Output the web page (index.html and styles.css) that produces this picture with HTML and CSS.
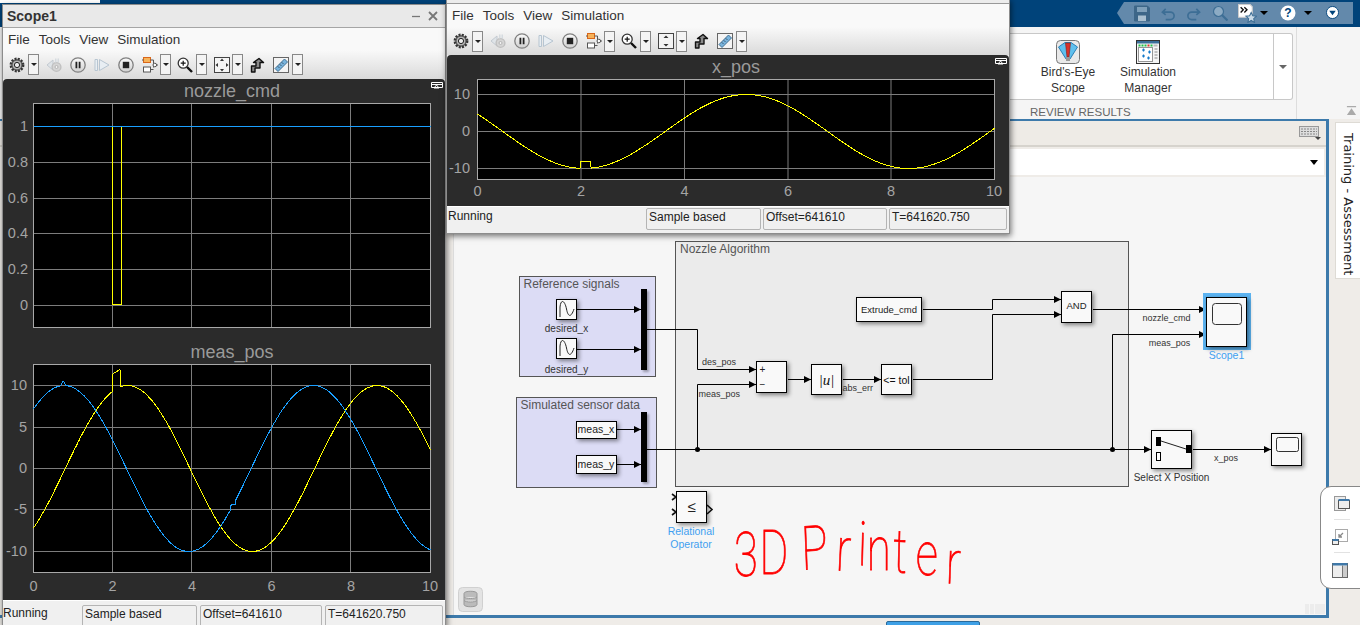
FILE: index.html
```html
<!DOCTYPE html>
<html lang="en">
<head>
<meta charset="utf-8">
<title>3D Printer model with scopes</title>
<link rel="stylesheet" href="styles.css">
</head>
<body>
<div class="desk">
  <svg class="defs" width="0" height="0" aria-hidden="true">
    <defs>
      <marker id="arr" markerUnits="userSpaceOnUse" markerWidth="8" markerHeight="8" refX="7" refY="4" orient="auto"><path d="M0 .5 7 4 0 7.5z" fill="#000"/></marker>
      <linearGradient id="btn" x1="0" y1="0" x2="0" y2="1"><stop offset="0" stop-color="#fbfbfb"/><stop offset="1" stop-color="#cfcfcf"/></linearGradient>
      <symbol id="i-gear" viewBox="0 0 16 16"><circle cx="8" cy="8" r="6.2" fill="#aaa" stroke="#333" stroke-width="2.4" stroke-dasharray="2 1.25"/><circle cx="8" cy="8" r="5" fill="#b5b5b5" stroke="#444"/><circle cx="8" cy="8" r="2.6" fill="#eee" stroke="#222"/></symbol>
      <symbol id="i-back" viewBox="0 0 16 16"><path d="M7 3 1 8l6 5z" fill="#dfe4e8" stroke="#c3cad1"/><circle cx="10.5" cy="10" r="4.4" fill="#d5d5d5" stroke="#c0c0c0" stroke-width="1.4"/><circle cx="10.5" cy="10" r="1.5" fill="#f2f2f2" stroke="#b5b5b5"/><path d="M9 1.5h1.5v4H9zM11.500 1.500H13v4h-1.500z" fill="#d5dbe0"/></symbol>
      <symbol id="i-pause" viewBox="0 0 16 16"><circle cx="8" cy="8" r="7.2" fill="url(#btn)" stroke="#808080" stroke-width="1.300"/><path d="M5.500 4.800h1.800v6.400H5.500zM8.700 4.800h1.800v6.400H8.700z" fill="#222"/></symbol>
      <symbol id="i-step" viewBox="0 0 16 16"><path d="M1 2.500h2.500v11H1z" fill="#e8eef3" stroke="#b7c5d1"/><path d="M5.500 2.500 15 8l-9.500 5.500z" fill="#e8eef3" stroke="#b7c5d1"/></symbol>
      <symbol id="i-stop" viewBox="0 0 16 16"><circle cx="8" cy="8" r="7.200" fill="url(#btn)" stroke="#808080" stroke-width="1.300"/><rect x="4.800" y="4.800" width="6.400" height="6.400" fill="#222"/></symbol>
      <symbol id="i-block" viewBox="0 0 16 16"><rect x="1.500" y=".5" width="7" height="5" fill="#f7b35a" stroke="#d9671a"/><rect x="1.500" y="10" width="7" height="5" fill="#fff" stroke="#555"/><path d="M8.500 3h3v7.500M8.500 12.500h3" fill="none" stroke="#555"/><circle cx="12.800" cy="8" r="1.800" fill="#fff" stroke="#555"/><path d="M0 3h1.500M14.600 8H16" stroke="#555"/></symbol>
      <symbol id="i-zoom" viewBox="0 0 16 16"><circle cx="6.200" cy="6.200" r="5" fill="#fff" stroke="#333" stroke-width="1.300"/><path d="M3.700 6.200h5M6.200 3.700v5" stroke="#111" stroke-width="1.200"/><path d="M10 10l5 5" stroke="#111" stroke-width="2.400"/></symbol>
      <symbol id="i-fit" viewBox="0 0 16 16"><rect x=".5" y=".5" width="15" height="15" fill="#f4f4f4" stroke="#444"/><path d="M8 1.500 10 4H6zM8 14.500 6 12h4zM1.500 8 4 6v4zM14.500 8 12 10V6z" fill="#333"/></symbol>
      <symbol id="i-fity" viewBox="0 0 16 16"><rect x=".5" y=".5" width="15" height="15" fill="#f4f4f4" stroke="#444"/><path d="M8 2.500 10.500 5h-5zM8 13.500 5.500 11h5z" fill="#333"/></symbol>
      <symbol id="i-jump" viewBox="0 0 16 16"><path d="M2.500 15V9H7V5.500H4.500L10 1.500l4.500 4H11V11H6v4z" fill="#8a8a8a" stroke="#111" stroke-width="1.400" stroke-linejoin="round"/></symbol>
      <symbol id="i-ruler" viewBox="0 0 16 16"><rect x=".5" y=".5" width="15" height="15" fill="#f4f4f4" stroke="#666"/><path d="M2 11.500 11.500 2 14.500 5 5 14.500z" fill="#79b4dd" stroke="#3f6f92"/><path d="M5 9.500 6.200 10.700M7 7.500 8.200 8.700M9 5.500 10.200 6.700" stroke="#234"/></symbol>
    </defs>
  </svg>

  <header class="topbar">
    <div class="stub"></div>
    <div class="qa">
      <svg class="qa-ic qa-save" viewBox="0 0 16 16"><path d="M.5.500h13l2 2v13H.5z" fill="#3d6688" stroke="#3d6688"/><rect x="3" y="1.500" width="10" height="5" fill="#7fa0ba"/><rect x="4" y="10" width="8" height="5.500" fill="#a9bfd0"/></svg>
      <svg class="qa-ic qa-undo" viewBox="0 0 16 16"><path d="M5 3 1.500 6.500 5 9.500M2 6.500h8a4 4 0 0 1 0 8H5" fill="none" stroke="#3d6e95" stroke-width="1.800"/></svg>
      <svg class="qa-ic qa-redo" viewBox="0 0 16 16"><path d="M11 3l3.500 3.500L11 9.500M14 6.500H6a4 4 0 0 0 0 8h5" fill="none" stroke="#3d6e95" stroke-width="1.800"/></svg>
      <svg class="qa-ic qa-find" viewBox="0 0 16 16"><circle cx="6.500" cy="6.500" r="5" fill="#8cabc4" stroke="#3d6e95" stroke-width="1.200"/><path d="M10 10l5.500 5.500" stroke="#3d6e95" stroke-width="2.200"/></svg>
      <svg class="qa-ic qa-short" viewBox="0 0 18 18"><path d="M.5.500h11l2 2v10H.5z" fill="#fff" stroke="#ccc"/><path d="M2.500 3l2.500 2.500-2.500 2.500M6 3l2.500 2.500L6 8" fill="none" stroke="#111" stroke-width="1.300"/><path d="M12.500 8l1.500 3.200 3.500.4-2.600 2.300.7 3.500-3.100-1.800-3.100 1.800.7-3.500-2.600-2.300 3.500-.4z" fill="#cbdbe8" stroke="#3d6e95"/></svg>
      <i class="qa-tri qa-tri-a"></i>
      <svg class="qa-ic qa-help" viewBox="0 0 16 16"><circle cx="8" cy="8" r="7.500" fill="#fff"/><text x="8" y="12.300" class="qa-q">?</text></svg>
      <i class="qa-tri qa-tri-b"></i>
      <svg class="qa-ic qa-min" viewBox="0 0 14 14"><circle cx="7" cy="7" r="6.500" fill="#fff" stroke="#00437a"/><path d="M3.500 5h7L7 10z" fill="#00437a"/></svg>
    </div>
  </header>

  <section class="ribbon">
    <div class="rgroup">
      <div class="rpanel">
        <div class="rbtn rbtn-first">
          <svg class="rico" viewBox="0 0 24 24"><rect x=".5" y=".5" width="23" height="23" rx="4" fill="#e9e9e9" stroke="#777"/><path d="M2.500 7 9 2.500h6L21.500 7 14 19h-4z" fill="#5fc0ee" stroke="#2b7fb5"/><path d="M9.500 3h5l-1.500 14h-2z" fill="#d8322a" stroke="#7d1f1a" stroke-width=".6"/><rect x="10" y="17" width="4" height="4" fill="#999"/></svg>
          <span>Bird's-Eye</span><span>Scope</span>
        </div>
        <div class="rbtn">
          <svg class="rico" viewBox="0 0 24 24"><rect x=".5" y=".5" width="23" height="23" fill="#f5f5f5" stroke="#333"/><rect x="1" y="1" width="22" height="2.500" fill="#3a6f9a"/><path d="M2.500 4.500h2v2h-2zM5.500 4.500h2v2h-2zM8.500 4.500h2v2h-2zM14.500 4.500h2v2h-2z" fill="#22c14a"/><path d="M11.500 4.500h2v2h-2z" fill="#e0312a"/><path d="M17.500 4.500h4v2h-4z" fill="#bbb"/><rect x="2.500" y="7.500" width="14" height="14" fill="#fff" stroke="#333" stroke-dasharray="1 1"/><path d="M6 10h3M7.500 8.500v3M12 12h3M13.500 10.500v3M6 16h3M7.500 14.500v3M11 18h3M12.500 16.500v3" stroke="#1479c9" stroke-width="1.200"/><path d="M18.500 9h3M18.500 12h3M18.500 15h3M18.500 18h3" stroke="#888"/></svg>
          <span>Simulation</span><span>Manager</span>
        </div>
        <div class="rmore"><i class="rmore-tri"></i></div>
      </div>
      <div class="rlabel">REVIEW RESULTS</div>
    </div>
    <svg class="rcollapse" viewBox="0 0 12 12"><path d="M1 1h10v1.500H1zM6 3.500 11 11H1z" fill="#aaa"/></svg>
  </section>

  <div class="work">
    <main class="editor">
      <div class="etool">
        <svg class="kbd" viewBox="0 0 22 14"><rect x=".5" y=".5" width="19" height="10" fill="#ddd" stroke="#999"/><path d="M2 3h16M2 5.500h16M2 8h16" stroke="#888" stroke-dasharray="2 1"/><path d="M16 11h6l-3 3z" fill="#444"/></svg>
      </div>
      <div class="eaddr"><i class="eaddr-tri"></i></div>
      <div class="canvas">
        <svg class="diagram" width="874" height="438" viewBox="453 177 874 438">
          <rect class="area-g" x="675.500" y="241.500" width="453" height="245"/>
          <rect class="area-b" x="519.500" y="276.500" width="136" height="100"/>
          <rect class="area-b" x="516.500" y="397.500" width="140" height="90"/>
          <text class="t-area" x="680" y="253">Nozzle Algorithm</text>
          <text class="t-area" x="523.500" y="288">Reference signals</text>
          <text class="t-area" x="520.500" y="409">Simulated sensor data</text>

          <g class="wire">
            <path marker-end="url(#arr)" d="M577 309.500H641"/>
            <path marker-end="url(#arr)" d="M577 349.500H641"/>
            <path marker-end="url(#arr)" d="M617 429.500H641"/>
            <path marker-end="url(#arr)" d="M617 464.500H641"/>
            <path marker-end="url(#arr)" d="M647 329.500H697.500V369.500H756"/>
            <path marker-end="url(#arr)" d="M697.500 449.500V384.500H756"/>
            <path marker-end="url(#arr)" d="M647 449.500H1151"/>
            <path marker-end="url(#arr)" d="M788 379.500H811"/>
            <path marker-end="url(#arr)" d="M843 379.500H881"/>
            <path marker-end="url(#arr)" d="M913 379.500H992.500V314.500H1061"/>
            <path marker-end="url(#arr)" d="M923 309.500H992.500V299.500H1061"/>
            <path marker-end="url(#arr)" d="M1093 309.500H1206"/>
            <path marker-end="url(#arr)" d="M1112.500 449.500V334.500H1206"/>
            <path marker-end="url(#arr)" d="M1193 449.500H1271"/>
          </g>
          <circle cx="697.500" cy="449.500" r="2.500"/>
          <circle cx="1112.500" cy="449.500" r="2.500"/>

          <rect x="641" y="289" width="6" height="81" class="bar"/>
          <rect x="641" y="412" width="6" height="70" class="bar"/>

          <rect class="blk" x="556.500" y="299.500" width="20" height="20"/>
          <path class="ink" d="M560 317V307C561 298 565 301 566.500 309S571 318 574 309"/>
          <rect class="blk" x="556.500" y="338.500" width="20" height="20"/>
          <path class="ink" d="M560 356V346C561 337 565 340 566.500 348S571 357 574 348"/>
          <text class="t-lbl t-mid" x="566.500" y="332">desired_x</text>
          <text class="t-lbl t-mid" x="566.500" y="372.500">desired_y</text>

          <rect class="blk" x="576.500" y="421.500" width="40" height="17"/>
          <rect class="blk" x="576.500" y="455.500" width="40" height="18"/>
          <text class="t-blk t-mid" x="596" y="433">meas_x</text>
          <text class="t-blk t-mid" x="596" y="468">meas_y</text>

          <rect class="blk" x="756.500" y="361.500" width="30" height="31"/>
          <text class="t-sign" x="759.500" y="373">+</text>
          <text class="t-sign" x="759.500" y="388">−</text>
          <rect class="blk" x="811.500" y="364.500" width="30" height="30"/>
          <text class="t-u t-mid" x="826.500" y="384.500">|u|</text>
          <rect class="blk" x="881.500" y="364.500" width="30" height="30"/>
          <text class="t-tol t-mid" x="896.500" y="383.500">&lt;= tol</text>
          <rect class="blk" x="856.500" y="297.500" width="65" height="24"/>
          <text class="t-small t-mid" x="889" y="312.500">Extrude_cmd</text>
          <rect class="blk" x="1061.500" y="291.500" width="30" height="31"/>
          <text class="t-small t-mid" x="1076.500" y="309">AND</text>

          <text class="t-wire" x="702" y="365">des_pos</text>
          <text class="t-wire" x="698.500" y="396.500">meas_pos</text>
          <text class="t-wire" x="842.500" y="391">abs_err</text>
          <text class="t-wire t-mid" x="1166.500" y="321">nozzle_cmd</text>
          <text class="t-wire t-mid" x="1169.500" y="346">meas_pos</text>
          <text class="t-wire t-mid" x="1226" y="461">x_pos</text>

          <rect class="sel" x="1203" y="293" width="48" height="57"/>
          <rect class="blk" x="1206.500" y="297.500" width="40" height="49"/>
          <rect class="screen" x="1212.500" y="303.500" width="29" height="21" rx="3"/>
          <text class="t-blue t-mid" x="1226.500" y="359">Scope1</text>

          <rect class="blk" x="1151.500" y="430.500" width="40" height="38"/>
          <rect x="1156" y="437" width="5" height="9"/>
          <rect x="1186" y="445" width="5" height="8"/>
          <rect class="hollow" x="1156.500" y="452.500" width="4" height="8"/>
          <path class="ink" d="M1161 441 1186 449"/>
          <text class="t-name t-mid" x="1171.500" y="481">Select X Position</text>

          <rect class="blk" x="1271.500" y="433.500" width="30" height="32"/>
          <rect class="screen" x="1276.500" y="437.500" width="22" height="14" rx="2"/>

          <path class="port" d="M672 494l4 3-4 3M672 509l4 3-4 3M707 505l5 4.500-5 4.500"/>
          <rect class="blk" x="676.500" y="491.500" width="30" height="31"/>
          <text class="t-le t-mid" x="691.500" y="512">≤</text>
          <text class="t-blue t-mid" x="691" y="535">Relational</text>
          <text class="t-blue t-mid" x="691" y="548">Operator</text>

          <text class="hand" transform="matrix(.72 0 0 1 0 0)" x="1019 1055 1097 1114 1160 1191 1204 1240 1272 1313" y="576 574 570 570 570 565 570 572 575 583" rotate="0 0 0 -3 4 2 0 2 0 3" xml:space="preserve">3D Printer</text>

          <rect class="dbbtn" x="458.500" y="587.500" width="24" height="24" rx="4"/>
          <path class="dbico" d="M464 593.500c0-3 13-3 13 0v11c0 3-13 3-13 0zM464 597c2 2 11 2 13 0M464 600.500c2 2 11 2 13 0"/>
          <rect class="grip" x="1305" y="604" width="4" height="10"/>
          <rect class="grip" x="1310" y="604" width="4" height="10"/>
          <rect class="grip" x="1315" y="604" width="10" height="10"/>
        </svg>
      </div>
    </main>
    <aside class="sidetab"><span>Training - Assessment</span></aside>
  </div>

  <footer class="bottom"><div class="bluebtn"></div></footer>

  <section class="win win-scope">
    <div class="wtitle"><b>Scope1</b>
      <span class="wbtns">
        <svg class="wb wb-min" viewBox="0 0 10 10"><path d="M1 5.500h8" stroke="#777" stroke-width="1.300"/></svg>
        <svg class="wb" viewBox="0 0 10 10"><path d="M1 1l8 8M9 1l-8 8" stroke="#777" stroke-width="1.800"/></svg>
      </span>
    </div>
    <nav class="menu"><span>File</span><span>Tools</span><span>View</span><span>Simulation</span></nav>
    <div class="tbar">
      <svg class="ic ic-a"><use href="#i-gear"/></svg><i class="dd dd-w"></i>
      <svg class="ic"><use href="#i-back"/></svg>
      <svg class="ic"><use href="#i-pause"/></svg>
      <svg class="ic"><use href="#i-step"/></svg>
      <svg class="ic"><use href="#i-stop"/></svg>
      <svg class="ic ic-b"><use href="#i-block"/></svg><i class="dd"></i>
      <svg class="ic ic-a"><use href="#i-zoom"/></svg><i class="dd dd-w"></i>
      <svg class="ic ic-b"><use href="#i-fit"/></svg><i class="dd"></i>
      <svg class="ic"><use href="#i-jump"/></svg>
      <svg class="ic ic-a"><use href="#i-ruler"/></svg><i class="dd"></i>
    </div>
    <div class="panel">
      <svg class="plot" width="442" height="521" viewBox="3 79 442 521">
        <path class="undock" d="M431.500 82.500h11v5h-11zM431.500 84.500h11M434 88l2.500-3 2.500 3z"/>
        <text class="ptitle" x="232" y="97">nozzle_cmd</text>
        <rect class="pbox" x="33.500" y="103.500" width="397" height="224"/>
        <path class="grid" d="M112.500 104V327M191.500 104V327M271.500 104V327M350.500 104V327M34 126.500H430M34 162.500H430M34 198.500H430M34 233.500H430M34 269.500H430M34 305.500H430"/>
        <rect class="pframe" x="33.500" y="103.500" width="397" height="224"/>
        <g class="ty">
          <text x="28" y="131">1</text><text x="28" y="167">0.8</text><text x="28" y="203">0.6</text><text x="28" y="238">0.4</text><text x="28" y="274">0.2</text><text x="28" y="310">0</text>
        </g>
        <polyline class="yel" points="33.500,126.500 112.500,126.500 112.500,304.500 121,304.500 121,126.500 430.500,126.500"/>
        <path class="blu" d="M33.500 126.500H430.500"/>

        <text class="ptitle" x="232" y="358">meas_pos</text>
        <rect class="pbox" x="33.500" y="364.500" width="397" height="208"/>
        <path class="grid" d="M112.500 365V572M191.500 365V572M271.500 365V572M350.500 365V572M34 385.500H430M34 427.500H430M34 468.500H430M34 509.500H430M34 551.500H430"/>
        <rect class="pframe" x="33.500" y="364.500" width="397" height="208"/>
        <g class="ty">
          <text x="27" y="390">10</text><text x="27" y="432">5</text><text x="27" y="473">0</text><text x="27" y="514">-5</text><text x="27" y="556">-10</text>
        </g>
        <g class="tx">
          <text x="33.500" y="591">0</text><text x="112.500" y="591">2</text><text x="192" y="591">4</text><text x="271.500" y="591">6</text><text x="351" y="591">8</text><text x="430" y="591">10</text>
        </g>
        <polyline class="yel" id="c-yel"/>
        <polyline class="blu" id="c-blu"/>
      </svg>
    </div>
    <div class="status">
      <span class="st st-run">Running</span><span class="st st-box st-a">Sample based</span><span class="st st-box st-b">Offset=641610</span><span class="st st-box st-c">T=641620.750</span>
    </div>
  </section>

  <section class="win win-xpos">
    <div class="wstub"></div>
    <nav class="menu menu-x"><span>File</span><span>Tools</span><span>View</span><span>Simulation</span></nav>
    <div class="tbar tbar-x">
      <svg class="ic ic-a"><use href="#i-gear"/></svg><i class="dd dd-w"></i>
      <svg class="ic"><use href="#i-back"/></svg>
      <svg class="ic"><use href="#i-pause"/></svg>
      <svg class="ic"><use href="#i-step"/></svg>
      <svg class="ic"><use href="#i-stop"/></svg>
      <svg class="ic ic-b"><use href="#i-block"/></svg><i class="dd"></i>
      <svg class="ic ic-a"><use href="#i-zoom"/></svg><i class="dd dd-w"></i>
      <svg class="ic ic-b"><use href="#i-fity"/></svg><i class="dd"></i>
      <svg class="ic"><use href="#i-jump"/></svg>
      <svg class="ic ic-a"><use href="#i-ruler"/></svg><i class="dd"></i>
    </div>
    <div class="panel panel-x">
      <svg class="plot" width="562" height="151" viewBox="447 55 562 151">
        <path class="undock" d="M995.500 58.500h11v5h-11zM995.500 60.500h11M998 64l2.500-3 2.500 3z"/>
        <text class="ptitle" x="736" y="73">x_pos</text>
        <rect class="pbox" x="477.500" y="79.500" width="517" height="100"/>
        <path class="grid" d="M581 80V179M684.500 80V179M788 80V179M891 80V179M478 94.500H994M478 131.500H994M478 168.500H994"/>
        <rect class="pframe" x="477.500" y="79.500" width="517" height="100"/>
        <g class="ty">
          <text x="470" y="99">10</text><text x="470" y="136">0</text><text x="470" y="173">-10</text>
        </g>
        <g class="tx">
          <text x="477.500" y="196">0</text><text x="581" y="196">2</text><text x="684.500" y="196">4</text><text x="788" y="196">6</text><text x="891" y="196">8</text><text x="994" y="196">10</text>
        </g>
        <polyline class="yel" id="c-x"/>
      </svg>
    </div>
    <div class="status status-x">
      <span class="st st-run">Running</span><span class="st st-box st-xa">Sample based</span><span class="st st-box st-xb">Offset=641610</span><span class="st st-box st-xc">T=641620.750</span>
    </div>
  </section>

  <aside class="float">
    <svg class="fi fi-a" viewBox="0 0 16 16"><rect x=".5" y=".5" width="11" height="14" fill="#ececec" stroke="#999"/><rect x="4.500" y="4.500" width="11" height="8" fill="#eee" stroke="#555"/><rect x="4.500" y="3" width="11" height="2" fill="#3f78a8"/></svg>
    <i class="fsep"></i>
    <svg class="fi fi-b" viewBox="0 0 16 16"><rect x="3.500" y=".5" width="12" height="12" fill="none" stroke="#555" stroke-dasharray="1 1"/><path d="M11 4 7 8M7 5v3h3" fill="none" stroke="#888" stroke-width="1.300"/><rect x=".5" y="10.500" width="6" height="5" fill="#eee" stroke="#555"/><rect x=".5" y="10" width="6" height="2" fill="#3f78a8"/></svg>
    <i class="fsep"></i>
    <svg class="fi fi-b" viewBox="0 0 16 16"><rect x=".5" y="1.500" width="15" height="14" fill="#eee" stroke="#666"/><rect x=".5" y="1" width="15" height="2.500" fill="#3f78a8"/><path d="M10.500 3.500v12" stroke="#777"/><rect x="11" y="4" width="4" height="11" fill="#ccc"/></svg>
  </aside>
</div>
<script src="plots.js"></script>
</body>
</html>
```

FILE: styles.css
```css
* { box-sizing: border-box; }
html, body { margin: 0; padding: 0; }
body { font-family: "Liberation Sans", Arial, sans-serif; overflow: hidden; }

.desk {
  position: relative;
  width: 1360px;
  height: 625px;
  overflow: hidden;
  display: flex;
  flex-direction: column;
  background: #efece8;
  color: #333;
}
.defs { position: absolute; }

/* top blue bar */
.topbar {
  height: 27px;
  flex: none;
  display: flex;
  justify-content: space-between;
  background: #00437a;
}
.stub { width: 100px; height: 3px; background: #fff; }
.qa {
  position: relative;
  width: 236px;
  height: 22px;
  margin: 2px 7px 0 0;
  background: #6389ab;
  clip-path: polygon(7px 0, 100% 0, 100% 100%, 7px 100%, 0 50%);
}
.qa-ic { position: absolute; }
.qa-save { left: 17px; top: 3px; width: 16px; height: 17px; }
.qa-undo { left: 44px; top: 4px; width: 15px; height: 15px; }
.qa-redo { left: 69px; top: 4px; width: 15px; height: 15px; }
.qa-find { left: 95px; top: 3px; width: 16px; height: 16px; }
.qa-short { left: 121px; top: 2px; width: 19px; height: 19px; }
.qa-help { left: 163px; top: 3px; width: 16px; height: 16px; }
.qa-min { left: 209px; top: 4px; width: 13px; height: 13px; }
.qa-q { font: bold 12px "Liberation Sans", sans-serif; text-anchor: middle; fill: #00437a; }
.qa-tri {
  position: absolute;
  top: 9px;
  border: 4px solid transparent;
  border-top: 4px solid #000;
  border-bottom: 0;
  width: 0;
  height: 0;
}
.qa-tri-a { left: 143px; border-width: 4px 4px 0; }
.qa-tri-b { left: 187px; border-width: 4px 4px 0; }

/* ribbon */
.ribbon {
  height: 92px;
  flex: none;
  display: flex;
  padding-left: 1010px;
  background: #f5f5f5;
}
.rgroup {
  width: 287px;
  border-right: 1px solid #ddd;
  display: flex;
  flex-direction: column;
}
.rpanel {
  width: 283px;
  height: 67px;
  margin-top: 6px;
  display: flex;
  background: #fff;
  border: 1px solid #c8c8c8;
  border-left: 0;
  border-radius: 0 3px 3px 0;
}
.rbtn {
  width: 80px;
  display: flex;
  flex-direction: column;
  align-items: center;
  font-size: 12px;
  line-height: 16px;
  color: #333;
}
.rbtn-first { margin-left: 18px; }
.rico { width: 24px; height: 24px; margin: 6px 0 0; }
.rmore {
  margin-left: auto;
  width: 19px;
  border-left: 1px solid #c8c8c8;
  display: flex;
  align-items: center;
  justify-content: center;
}
.rmore-tri { width: 0; height: 0; border: 4px solid transparent; border-top: 4px solid #666; border-bottom: 0; }
.rlabel { margin: 5px 0 0 20px; font-size: 11.5px; line-height: 14px; color: #666; }
.rcollapse { width: 11px; height: 11px; margin: 78px 0 0 49px; }

/* work area */
.work { flex: none; height: 499px; display: flex; }
.editor {
  width: 1329px;
  height: 499px;
  flex: none;
  display: flex;
  flex-direction: column;
  border: solid #3d7aab;
  border-width: 2px 3px 3px 0;
}
.etool {
  height: 26px;
  flex: none;
  display: flex;
  justify-content: flex-end;
  align-items: center;
  padding-right: 5px;
  background: #eeebe6;
  border-bottom: 2px solid #d6d3cd;
}
.kbd { width: 22px; height: 14px; }
.eaddr {
  height: 26px;
  flex: none;
  margin: 2px 2px 2px 453px;
  display: flex;
  justify-content: flex-end;
  align-items: center;
  padding-right: 6px;
  background: #fff;
}
.eaddr-tri { width: 0; height: 0; border: 4.500px solid transparent; border-top: 5px solid #000; border-bottom: 0; }
.canvas { flex: 1; margin-left: 453px; background: #f6f6f6; overflow: hidden; border-left: 1px solid #ddd; }
.diagram { display: block; margin-left: -1px; }

.sidetab {
  width: 25px;
  height: 157px;
  margin: 3px 0 0 6px;
  background: #fff;
  border: 1px solid #dedbd5;
  border-right: 0;
  display: flex;
  justify-content: center;
  padding-top: 10px;
}
.sidetab span {
  writing-mode: vertical-rl;
  font: 13px "DejaVu Sans", sans-serif;
  color: #222;
  white-space: nowrap;
}
.bottom { flex: none; height: 7px; padding: 3px 0 0 886px; overflow: hidden; }
.bluebtn { width: 94px; height: 8px; background: #3ea0e6; border: 1px solid #2a6a9a; border-radius: 2px; }

/* diagram parts */
.area-g { fill: #ebebeb; stroke: #555; }
.area-b { fill: #dcdcf5; stroke: #555; }
.wire path { fill: none; stroke: #000; }
.bar { filter: drop-shadow(2px 2px 1px rgba(0,0,0,.3)); }
.blk { fill: #f9f9f9; stroke: #000; filter: drop-shadow(2px 2px 2px rgba(0,0,0,.45)); }
.ink { fill: none; stroke: #222; }
.screen { fill: #f9f9f9; stroke: #333; }
.sel { fill: #5cb3f0; }
.hollow { fill: #fff; stroke: #000; }
.port { fill: none; stroke: #111; stroke-width: 1.600; }
.t-mid { text-anchor: middle; }
.t-area { font-size: 12px; fill: #555; }
.t-lbl { font-size: 10px; fill: #333; }
.t-wire { font-size: 9px; fill: #333; }
.t-blk { font-size: 10.500px; fill: #222; }
.t-small { font-size: 9.500px; fill: #222; }
.t-sign { font-size: 10px; fill: #222; }
.t-u { font: italic 15px "Liberation Serif", serif; fill: #111; }
.t-tol { font-size: 10.500px; fill: #111; }
.t-blue { font-size: 10.500px; fill: #3fa0f0; }
.t-name { font-size: 10px; fill: #333; }
.t-le { font-size: 15px; fill: #222; }
.hand { font-family: "Roboto", sans-serif; font-weight: 100; font-size: 61px; fill: #f00; stroke: #f00; stroke-width: .8; }
.dbbtn { fill: #e3e3e3; stroke: #d0d0d0; }
.dbico { fill: #bbb; stroke: #999; }
.grip { fill: #ececec; }

/* scope windows */
.win {
  position: absolute;
  display: flex;
  flex-direction: column;
  background: #f0f0f0;
  border: 1px solid #8c8c8c;
  box-shadow: 1px 2px 6px rgba(0,0,0,.55);
}
.win-scope { left: 2px; top: 4px; width: 444px; height: 624px; }
.win-xpos { left: 446px; top: -1px; width: 564px; height: 235px; }
.wtitle {
  height: 23px;
  flex: none;
  display: flex;
  align-items: center;
  justify-content: space-between;
  padding: 0 7px 0 4px;
  background: #e9e9e9;
  border-bottom: 1px solid #a5a5a5;
  font-size: 14px;
  color: #333;
}
.wbtns { display: flex; gap: 7px; }
.wb { width: 10px; height: 10px; }
.wstub { height: 4px; flex: none; background: #ececec; border-bottom: 1px solid #999; }
.menu {
  height: 22px;
  flex: none;
  display: flex;
  align-items: center;
  gap: 9px;
  padding-left: 5px;
  background: #f9f9f9;
  font-size: 13.500px;
  color: #333;
}
.menu-x { height: 23px; }
.tbar {
  height: 29px;
  flex: none;
  display: flex;
  align-items: center;
  padding-left: 6px;
  background: linear-gradient(#f9f9f9, #dadada);
}
.tbar-x { height: 28px; }
.ic { width: 16px; height: 16px; flex: none; margin-right: 8px; }
.ic-a, .ic-b { margin-right: 3px; }
.ic-b { margin-right: 2px; }
.dd {
  width: 11px;
  height: 21px;
  flex: none;
  margin-right: 6px;
  display: flex;
  align-items: center;
  justify-content: center;
  background: #f4f4f4;
  border: 1px solid #888;
}
.dd-w { margin-right: 7px; }
.dd::before { content: ""; border: 3px solid transparent; border-top: 3px solid #222; border-bottom: 0; }
.panel { flex: none; height: 521px; background: #2b2b2b; border-radius: 4px 4px 0 0; }
.panel-x { height: 151px; }
.plot { display: block; }
.ptitle { font-size: 18px; fill: #9a9a9a; text-anchor: middle; }
.pbox { fill: #000; }
.pframe { fill: none; stroke: #a8a8a8; }
.grid { fill: none; stroke: #7c7c7c; }
.ty text { font-size: 14.500px; fill: #a4a4a4; text-anchor: end; }
.tx text { font-size: 14.500px; fill: #a4a4a4; text-anchor: middle; }
.yel { fill: none; stroke: #ff0; shape-rendering: crispEdges; }
.blu { fill: none; stroke: #1a9fff; shape-rendering: crispEdges; }
.undock { fill: none; stroke: #fff; }

.status {
  flex: 1;
  display: flex;
  align-items: flex-start;
  border-top: 1px solid #fff;
  padding-top: 4px;
  font-size: 12px;
  color: #222;
  background: #f0f0f0;
}
.status-x { padding-top: 1px; }
.st { display: block; height: 22px; line-height: 12px; padding: 2px 0 0 2px; flex: none; }
.st-box { border: 1px solid #b4b4b4; border-radius: 2px; }
.st-run { width: 79px; padding-left: 0; }
.st-a { width: 115px; margin-right: 3px; }
.st-b { width: 122px; margin-right: 3px; }
.st-c { width: 118px; }
.status-x .st-run { width: 199px; padding-left: 1px; }
.st-xa { width: 115px; margin-right: 2px; }
.st-xb { width: 124px; margin-right: 2px; }
.st-xc { width: 118px; }

/* floating palette */
.float {
  position: absolute;
  left: 1320px;
  top: 486px;
  width: 42px;
  height: 103px;
  display: flex;
  flex-direction: column;
  align-items: flex-start;
  padding: 9px 0 0 11px;
  background: #fff;
  border: 1px solid #888;
  border-radius: 11px 0 0 11px;
}
.fi { width: 16px; height: 16px; flex: none; }
.fi-a { margin-left: 2px; }
.fsep { width: 16px; height: 1px; margin: 7px 0 9px 2px; background: #e2e2e2; flex: none; }
```

FILE: plots.js
```js
function curve(id, f, x0, dx, y0, dy, tMax) {
  var pts = [];
  for (var i = 0; i <= Math.round(tMax / 0.02); i++) {
    var t = i * 0.02;
    pts.push((x0 + dx * t).toFixed(1) + ',' + (y0 - dy * f(t)).toFixed(1));
  }
  document.getElementById(id).setAttribute('points', pts.join(' '));
}
curve('c-yel', function (t) {
  return t >= 2 && t < 2.2 ? 11.4 + (t - 2) * 3 : 10 * Math.sin(t - 0.8);
}, 33.5, 39.7, 468.5, 8.3, 10);
curve('c-blu', function (t) {
  if (t >= 4.97 && t < 5.1) return -4.3;
  var bump = Math.max(0, 0.6 * (1 - Math.abs(t - 0.75) / 0.06));
  return 10 * Math.sin(t + 0.8) + bump;
}, 33.5, 39.7, 468.5, 8.3, 10);
curve('c-x', function (t) {
  return t >= 2 && t < 2.2 ? -8.1 : 10 * Math.sin(t - 3.63);
}, 477.5, 51.7, 131.5, 3.7, 10);
```
